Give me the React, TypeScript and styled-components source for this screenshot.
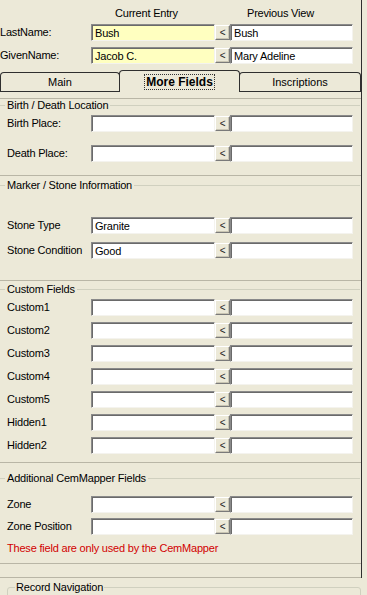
import React from "react";
import styled, { createGlobalStyle } from "styled-components";

// XP "classic" palette
const FACE = "#ece9d8";
const EDGE_DARK = "#2f2f2f";
const GROUP_LINE = "#d0d0bf";
const ETCH = "#b9b6a6";

const GlobalStyle = createGlobalStyle`
  html, body {
    margin: 0;
    padding: 0;
    background: ${FACE};
    font-family: "Liberation Sans", Arial, sans-serif;
    font-size: 11px;
    letter-spacing: -0.2px;
    color: #000;
    overflow: hidden;
  }
`;

const Page = styled.div`
  width: 367px;
  height: 595px;
  overflow: hidden;
  background: ${FACE};
`;

const Upper = styled.div`
  width: 362px;
  height: 578px;
  box-sizing: border-box;
  border-right: 1px solid ${EDGE_DARK};
  display: flex;
  flex-direction: column;
`;

const COLS = "91px 124px 15px 123px";

const EntryGrid = styled.div`
  display: grid;
  grid-template-columns: ${COLS};
  grid-template-rows: 15px 23px 23px;
  align-items: center;
  padding-top: 6px;
`;

const ColumnTitle = styled.div<{ $col: number; $indent: number }>`
  grid-column: ${(p) => p.$col};
  padding-left: ${(p) => p.$indent}px;
  line-height: 15px;
  white-space: nowrap;
`;

const FieldLabel = styled.div<{ $indent?: number }>`
  padding-left: ${(p) => p.$indent ?? 7}px;
  white-space: nowrap;
  line-height: 13px;
`;

const TextBox = styled.div<{ $tint?: boolean }>`
  box-sizing: border-box;
  height: 17px;
  background: ${(p) => (p.$tint ? "#ffffc0" : "#ffffff")};
  border-top: 1px solid #8a8a8a;
  border-left: 1px solid #8a8a8a;
  border-right: 1px solid #f4f3ee;
  border-bottom: 1px solid #f4f3ee;
  box-shadow: inset 1px 1px 0 #6a6a6a;
  padding: 2px 0 0 3px;
  line-height: 13px;
  white-space: nowrap;
  overflow: hidden;
`;

const CopyButton = styled.div`
  box-sizing: border-box;
  width: 15px;
  height: 15px;
  justify-self: start;
  background: ${FACE};
  border-top: 1px solid #ffffff;
  border-left: 1px solid #ffffff;
  border-right: 1px solid #7a7a7a;
  border-bottom: 1px solid #7a7a7a;
  box-shadow: inset -1px -1px 0 #c9c5b3;
  display: flex;
  align-items: center;
  justify-content: center;
  font-size: 10px;
  line-height: 10px;
  color: #222;
`;

const TabStrip = styled.div`
  display: flex;
  align-items: flex-end;
  box-sizing: border-box;
  height: 22px;
  margin-top: 3px;
  border-bottom: 1px solid ${EDGE_DARK};
`;

const Tab = styled.div<{ $active?: boolean; $w: number }>`
  box-sizing: border-box;
  width: ${(p) => p.$w}px;
  height: ${(p) => (p.$active ? 22 : 19)}px;
  margin-bottom: ${(p) => (p.$active ? -1 : 0)}px;
  & + & {
    margin-left: -1px;
  }
  position: relative;
  z-index: ${(p) => (p.$active ? 1 : 0)};
  background: ${FACE};
  border: 1px solid ${EDGE_DARK};
  border-bottom: none;
  border-radius: 4px 4px 0 0;
  display: flex;
  align-items: center;
  justify-content: center;
  font-weight: ${(p) => (p.$active ? 700 : 400)};
  font-size: ${(p) => (p.$active ? 12 : 11)}px;
  letter-spacing: 0;
  padding-top: ${(p) => (p.$active ? 1 : 0)}px;
`;

const FocusText = styled.span`
  outline: 1px dotted #333;
  padding: 0 1px;
  line-height: 14px;
`;

const Pane = styled.div`
  display: flex;
  flex-direction: column;
  padding-top: 6px;
`;

const Section = styled.div<{ $headGap: number; $bodyGap: number; $rowGap: number; $bottom: number }>`
  border-top: 1px solid ${ETCH};
  padding-top: ${(p) => p.$headGap}px;
  padding-bottom: ${(p) => p.$bottom}px;
  display: flex;
  flex-direction: column;

  & > .body {
    margin-top: ${(p) => p.$bodyGap}px;
    display: flex;
    flex-direction: column;
    gap: ${(p) => p.$rowGap}px;
  }
`;

const GroupHead = styled.div`
  display: flex;
  align-items: center;
  height: 13px;
  &::before {
    content: "";
    width: 5px;
    height: 1px;
    background: ${GROUP_LINE};
  }
  &::after {
    content: "";
    flex: 1;
    height: 1px;
    background: ${GROUP_LINE};
    margin-right: 1px;
  }
  span {
    padding: 0 2px;
    line-height: 13px;
    white-space: nowrap;
  }
`;

const FieldRow = styled.div`
  display: grid;
  grid-template-columns: ${COLS};
  align-items: center;
  height: 17px;
`;

const Note = styled.div`
  padding-left: 7px;
  margin-top: 2px;
  line-height: 13px;
  color: #d20000;
`;

const Band = styled.div`
  box-sizing: border-box;
  height: 15px;
  border-top: 1px solid ${ETCH};
  border-bottom: 1px solid ${ETCH};
`;

const NavGroup = styled.fieldset`
  margin: 3px 0 0 7px;
  padding: 0 0 0 7px;
  width: 354px;
  height: 40px;
  box-sizing: border-box;
  border: 1px solid ${GROUP_LINE};
  border-radius: 3px;

  legend {
    padding: 0 1px;
    line-height: 13px;
    font-size: 11px;
  }
`;

type Field = { label: string; current?: string; previous?: string };

function Row({ label, current = "", previous = "" }: Field) {
  return (
    <FieldRow>
      <FieldLabel>{label}</FieldLabel>
      <TextBox>{current}</TextBox>
      <CopyButton>&lt;</CopyButton>
      <TextBox>{previous}</TextBox>
    </FieldRow>
  );
}

const customFields = ["Custom1", "Custom2", "Custom3", "Custom4", "Custom5", "Hidden1", "Hidden2"];

export default function App() {
  return (
    <Page>
      <GlobalStyle />
      <Upper>
        <EntryGrid>
          <ColumnTitle $col={2} $indent={24}>Current Entry</ColumnTitle>
          <ColumnTitle $col={4} $indent={17}>Previous View</ColumnTitle>

          <FieldLabel $indent={0}>LastName:</FieldLabel>
          <TextBox $tint>Bush</TextBox>
          <CopyButton>&lt;</CopyButton>
          <TextBox>Bush</TextBox>

          <FieldLabel $indent={0}>GivenName:</FieldLabel>
          <TextBox $tint>Jacob C.</TextBox>
          <CopyButton>&lt;</CopyButton>
          <TextBox>Mary Adeline</TextBox>
        </EntryGrid>

        <TabStrip>
          <Tab $w={120}>Main</Tab>
          <Tab $w={121} $active>
            <FocusText>More Fields</FocusText>
          </Tab>
          <Tab $w={122}>Inscriptions</Tab>
        </TabStrip>

        <Pane>
          <Section $headGap={0} $bodyGap={3} $rowGap={13} $bottom={13}>
            <GroupHead><span>Birth / Death Location</span></GroupHead>
            <div className="body">
              <Row label="Birth Place:" />
              <Row label="Death Place:" />
            </div>
          </Section>

          <Section $headGap={3} $bodyGap={25} $rowGap={8} $bottom={21}>
            <GroupHead><span>Marker / Stone Information</span></GroupHead>
            <div className="body">
              <Row label="Stone Type" current="Granite" />
              <Row label="Stone Condition" current="Good" />
            </div>
          </Section>

          <Section $headGap={2} $bodyGap={3} $rowGap={6} $bottom={8}>
            <GroupHead><span>Custom Fields</span></GroupHead>
            <div className="body">
              {customFields.map((f) => (
                <Row key={f} label={f} />
              ))}
            </div>
          </Section>

          <Section $headGap={9} $bodyGap={11} $rowGap={5} $bottom={8}>
            <GroupHead><span>Additional CemMapper Fields</span></GroupHead>
            <div className="body">
              <Row label="Zone" />
              <Row label="Zone Position" />
              <Note>These field are only used by the CemMapper</Note>
            </div>
          </Section>

          <Band />
        </Pane>
      </Upper>

      <NavGroup>
        <legend>Record Navigation</legend>
      </NavGroup>
    </Page>
  );
}
